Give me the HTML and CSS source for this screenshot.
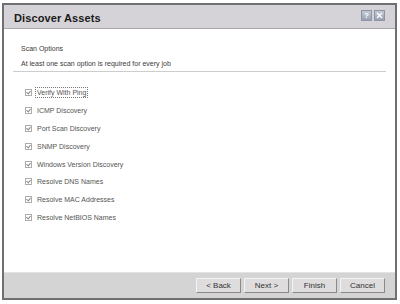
FILE: index.html
```html
<!DOCTYPE html>
<html lang="en">
<head>
    <meta charset="UTF-8">
    <title>Discover Assets</title>
    <link rel="stylesheet" href="styles.css">
</head>
<body>
    <div class="dialog">
        <div class="titlebar">
            <h1>Discover Assets</h1>
            <div class="title-icons">
                <span class="tb-icon">?</span>
                <span class="tb-icon">
                    <svg width="7" height="7" viewBox="0 0 7 7"><path d="M1 1 L6 6 M6 1 L1 6" stroke="#fff" stroke-width="1.4" fill="none"/></svg>
                </span>
            </div>
        </div>
        <div class="content">
            <div class="section-head">
                <div class="section-title">Scan Options</div>
                <div class="section-note">At least one scan option is required for every job</div>
            </div>
            <ul class="options">
                <li><span class="check"></span><span class="label focused">Verify With Ping</span></li>
                <li><span class="check"></span><span class="label">ICMP Discovery</span></li>
                <li><span class="check"></span><span class="label">Port Scan Discovery</span></li>
                <li><span class="check"></span><span class="label">SNMP Discovery</span></li>
                <li><span class="check"></span><span class="label">Windows Version Discovery</span></li>
                <li><span class="check"></span><span class="label">Resolve DNS Names</span></li>
                <li><span class="check"></span><span class="label">Resolve MAC Addresses</span></li>
                <li><span class="check"></span><span class="label">Resolve NetBIOS Names</span></li>
            </ul>
        </div>
        <div class="footer">
            <button class="btn">&lt; Back</button>
            <button class="btn">Next &gt;</button>
            <button class="btn">Finish</button>
            <button class="btn">Cancel</button>
        </div>
    </div>
</body>
</html>
```

FILE: styles.css
```css
body {
    margin: 0;
    background-color: #fff;
    font-family: "Liberation Sans", Arial, sans-serif;
}
.dialog {
    box-sizing: border-box;
    width: 395px;
    height: 297px;
    margin: 3px 0 0 2px;
    border: 2px solid #707070;
    display: flex;
    flex-direction: column;
    background-color: #fff;
}
.titlebar {
    height: 23px;
    background-color: #d5d3d8;
    border-bottom: 1px solid #a9a9ad;
    display: flex;
    align-items: center;
    justify-content: space-between;
    padding: 0 10px;
}
.titlebar h1 {
    margin: 0;
    font-size: 11px;
    font-weight: bold;
    color: #1a1a1a;
    letter-spacing: 0.1px;
    padding-top: 2px;
}
.title-icons {
    display: flex;
    gap: 2px;
    margin-top: -3px;
}
.tb-icon {
    box-sizing: border-box;
    width: 11px;
    height: 11px;
    border: 1px solid #8d94a6;
    background: linear-gradient(#c3c8d4, #98a0b2);
    color: #fff;
    font-size: 8px;
    font-weight: bold;
    display: flex;
    align-items: center;
    justify-content: center;
}
.content {
    flex: 1;
    padding: 15px 9px 0;
}
.section-head {
    padding-left: 8px;
    padding-bottom: 2px;
    border-bottom: 1px solid #cdcdcd;
    font-size: 7px;
    color: #3a3a3a;
}
.section-title {
    line-height: 10px;
}
.section-note {
    line-height: 10px;
    margin-top: 5px;
}
.options {
    list-style: none;
    margin: 12px 0 0;
    padding: 0 0 0 12px;
}
.options li {
    height: 17.8px;
    display: flex;
    align-items: center;
    font-size: 7px;
    color: #555;
}
.check {
    box-sizing: border-box;
    width: 7px;
    height: 7px;
    border: 1px solid #adadad;
    margin-right: 3px;
    position: relative;
}
.check::after {
    content: "";
    position: absolute;
    left: 1px;
    top: 0;
    width: 2px;
    height: 3px;
    border-right: 1px solid #888;
    border-bottom: 1px solid #888;
    transform: rotate(40deg);
}
.label {
    padding: 1px 1px;
    border: 1px dotted transparent;
}
.label.focused {
    border-color: #777;
}
.footer {
    height: 25px;
    background-color: #d4d4d4;
    border-top: 1px solid #e3e3e3;
    display: flex;
    align-items: center;
    justify-content: flex-end;
    gap: 3px;
    padding: 0 10px;
}
.btn {
    box-sizing: border-box;
    width: 45px;
    height: 15px;
    padding: 0;
    background-color: #dedcdc;
    border: 1px solid;
    border-color: #f4f4f4 #8a8a8a #8a8a8a #f4f4f4;
    font-family: "Liberation Sans", Arial, sans-serif;
    font-size: 8px;
    color: #333;
}
```
